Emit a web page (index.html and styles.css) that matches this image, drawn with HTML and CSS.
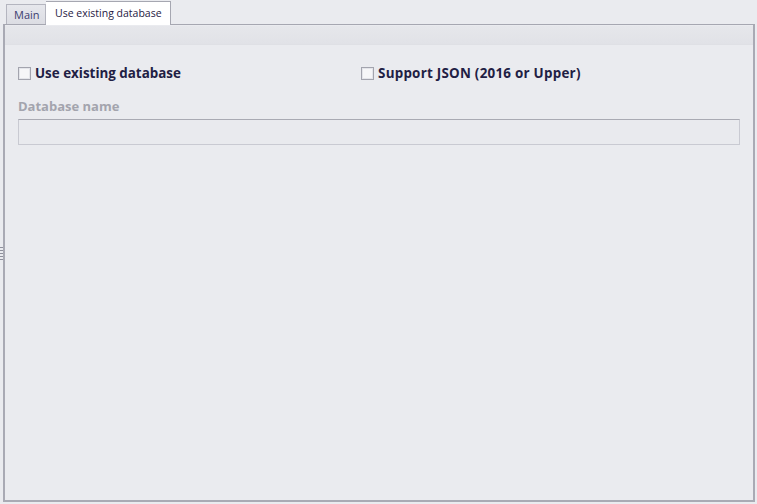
FILE: index.html
```html
<!DOCTYPE html>
<html>
<head>
<meta charset="utf-8">
<link rel="stylesheet" href="styles.css">
</head>
<body>
<div class="app">
  <div class="grip"></div>
  <div class="tabs">
    <div class="tab">Main</div>
    <div class="tab active">Use existing database</div>
  </div>
  <div class="panel">
    <div class="band"></div>
    <div class="content">
      <div class="checks">
        <label class="check first"><span class="box"></span>Use existing database</label>
        <label class="check"><span class="box"></span>Support JSON (2016 or Upper)</label>
      </div>
      <div class="field-label">Database name</div>
      <div class="input"></div>
    </div>
  </div>
</div>
</body>
</html>
```
FILE: styles.css
```css
html, body {
  margin: 0;
  padding: 0;
  background: #eaebef;
  font-family: "Open Sans", "Noto Sans", "Liberation Sans", sans-serif;
}
.app {
  position: relative;
  width: 757px;
  height: 504px;
  box-sizing: border-box;
  padding: 0 2px 0 3px;
  display: flex;
  flex-direction: column;
}
.grip {
  position: absolute;
  left: 0;
  top: 247px;
  width: 3px;
  height: 14px;
  background: repeating-linear-gradient(to bottom, #8f909c 0 1px, transparent 1px 3px);
}
.tabs {
  display: flex;
  align-items: flex-end;
  height: 24px;
  padding-left: 3px;
  position: relative;
  z-index: 2;
}
.tab {
  box-sizing: border-box;
  width: 40px;
  height: 20px;
  padding: 0 0 0 7px;
  font-size: 11px;
  line-height: 19px;
  white-space: nowrap;
  color: #3b3d70;
  background: linear-gradient(#e6e7ec, #dcdde3);
  border: 1px solid #b4b5bf;
  border-bottom: none;
}
.tab.active {
  width: 125px;
  height: 24px;
  margin-bottom: -1px;
  padding: 0 0 0 9px;
  line-height: 22px;
  font-size: 10.5px;
  background: #ffffff;
  color: #1f2044;
  border-color: #a6a7b1;
  border-left: none;
}
.panel {
  flex: 1;
  margin-bottom: 2px;
  border: 1px solid #a6a7b1;
  border-left: 2px solid #a9aab4;
  border-right: 2px solid #a9aab4;
  border-bottom: 2px solid #a9aab4;
  background: #eaebef;
  display: flex;
  flex-direction: column;
}
.band {
  height: 18px;
  margin-top: 1px;
  background: linear-gradient(#e6e7eb, #e1e2e7);
  border-bottom: 1px solid #dfe0e5;
}
.content {
  padding: 20px 13px 0 13px;
}
.checks {
  display: flex;
  height: 16px;
  align-items: center;
}
.check {
  display: flex;
  align-items: center;
  font-size: 13.4px;
  font-weight: 700;
  color: #1f2044;
  white-space: nowrap;
}
.check.first {
  width: 343px;
}
.check + .check {
  letter-spacing: 0.25px;
}
.box {
  box-sizing: border-box;
  width: 13px;
  height: 13px;
  margin-right: 4px;
  border: 1px solid #a3a4ae;
  background: #f6f6f8;
  box-shadow: inset 0 0 0 1px #e4e5ea;
}
.field-label {
  margin-top: 16px;
  font-size: 13px;
  font-weight: 700;
  color: #a3a4ad;
  height: 18px;
  line-height: 18px;
}
.input {
  margin-top: 4px;
  height: 26px;
  box-sizing: border-box;
  border: 1px solid #c9cad2;
  border-top-color: #a9aab3;
  background: #e9eaee;
}
```
